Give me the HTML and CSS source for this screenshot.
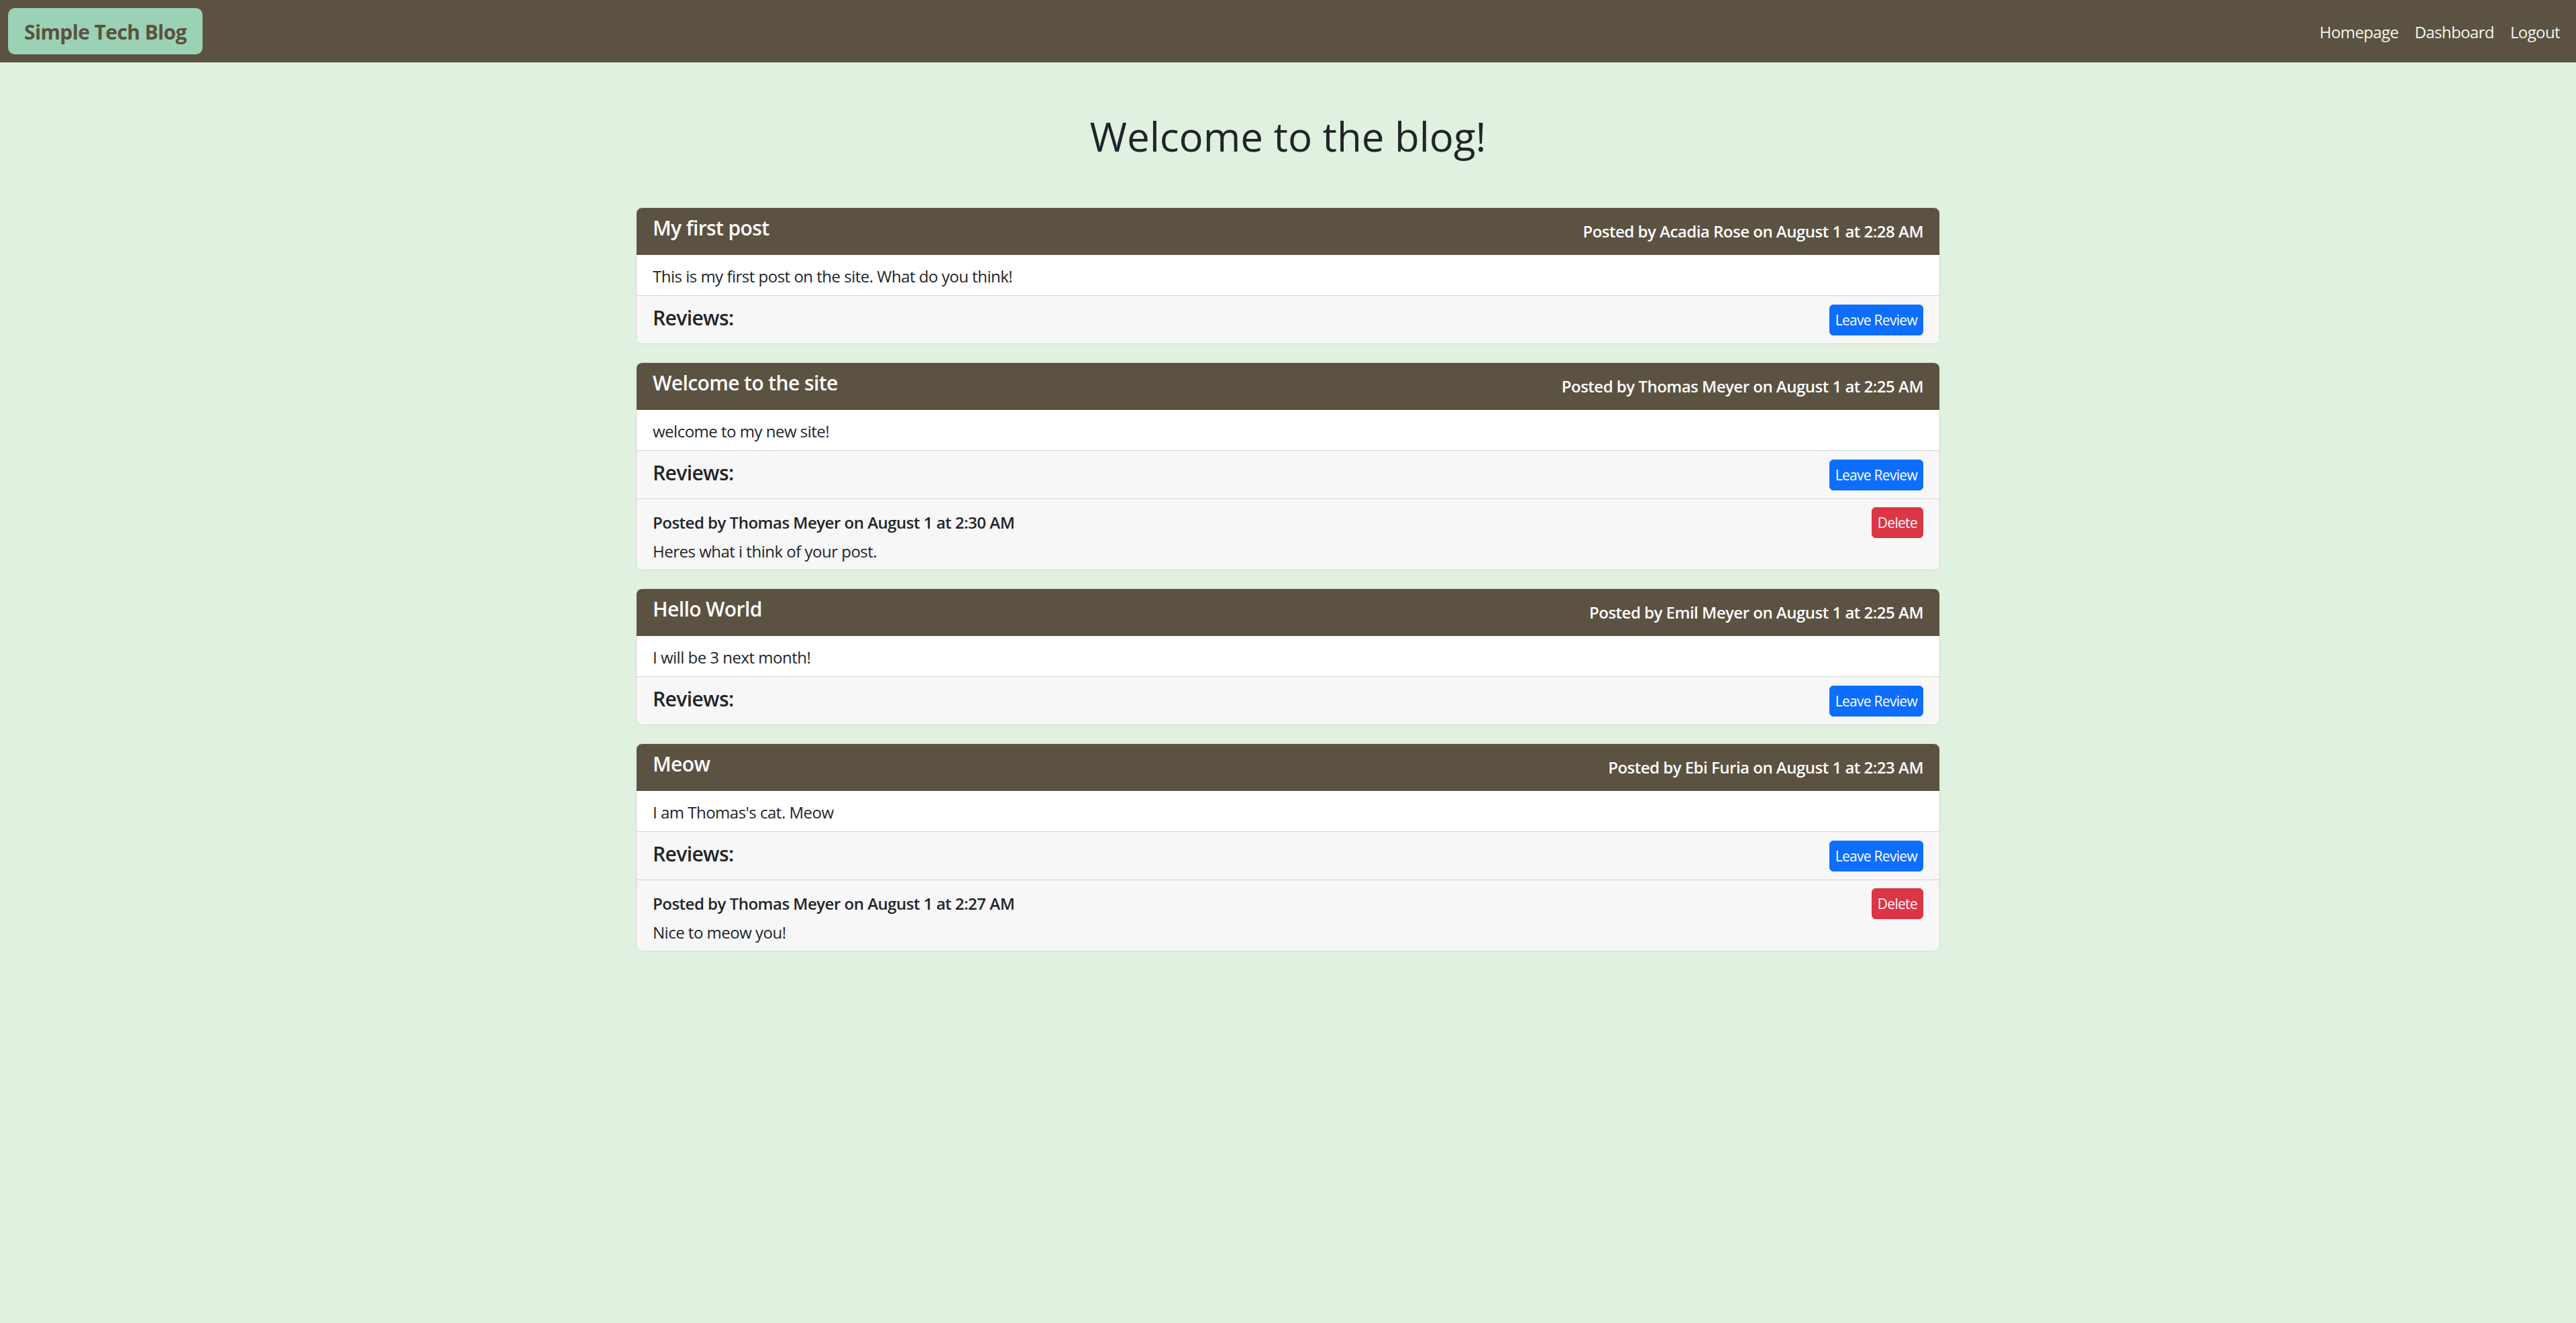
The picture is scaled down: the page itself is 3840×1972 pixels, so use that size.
FILE: index.html
```html
<!DOCTYPE html>
<html lang="en">
<head>
<meta charset="utf-8">
<title>Simple Tech Blog</title>
<link rel="stylesheet" href="styles.css">
</head>
<body>
<nav class="navbar">
  <a class="brand" href="#">Simple Tech Blog</a>
  <div class="nav-links">
    <a href="#">Homepage</a>
    <a href="#">Dashboard</a>
    <a href="#">Logout</a>
  </div>
</nav>
<main class="container">
  <h1 class="page-title">Welcome to the blog!</h1>

  <article class="card">
    <header class="card-header">
      <h5 class="post-title">My first post</h5>
      <span class="post-meta">Posted by Acadia Rose on August 1 at 2:28 AM</span>
    </header>
    <div class="card-body"><p>This is my first post on the site. What do you think!</p></div>
    <div class="card-footer">
      <h5 class="reviews-title">Reviews:</h5>
      <button class="btn btn-primary">Leave Review</button>
    </div>
  </article>

  <article class="card">
    <header class="card-header">
      <h5 class="post-title">Welcome to the site</h5>
      <span class="post-meta">Posted by Thomas Meyer on August 1 at 2:25 AM</span>
    </header>
    <div class="card-body"><p>welcome to my new site!</p></div>
    <div class="card-footer">
      <h5 class="reviews-title">Reviews:</h5>
      <button class="btn btn-primary">Leave Review</button>
    </div>
    <div class="review">
      <div class="review-head">
        <span class="review-meta">Posted by Thomas Meyer on August 1 at 2:30 AM</span>
        <button class="btn btn-danger">Delete</button>
      </div>
      <p>Heres what i think of your post.</p>
    </div>
  </article>

  <article class="card">
    <header class="card-header">
      <h5 class="post-title">Hello World</h5>
      <span class="post-meta">Posted by Emil Meyer on August 1 at 2:25 AM</span>
    </header>
    <div class="card-body"><p>I will be 3 next month!</p></div>
    <div class="card-footer">
      <h5 class="reviews-title">Reviews:</h5>
      <button class="btn btn-primary">Leave Review</button>
    </div>
  </article>

  <article class="card">
    <header class="card-header">
      <h5 class="post-title">Meow</h5>
      <span class="post-meta">Posted by Ebi Furia on August 1 at 2:23 AM</span>
    </header>
    <div class="card-body"><p>I am Thomas's cat. Meow</p></div>
    <div class="card-footer">
      <h5 class="reviews-title">Reviews:</h5>
      <button class="btn btn-primary">Leave Review</button>
    </div>
    <div class="review">
      <div class="review-head">
        <span class="review-meta">Posted by Thomas Meyer on August 1 at 2:27 AM</span>
        <button class="btn btn-danger">Delete</button>
      </div>
      <p>Nice to meow you!</p>
    </div>
  </article>
</main>
</body>
</html>
```

FILE: styles.css
```css
html, body {
  margin: 0;
  padding: 0;
}

body {
  background: #e0f1df;
  font-family: "Open Sans", "Noto Sans", sans-serif;
  font-size: 24px;
  line-height: 1.5;
  color: #212529;
  min-height: 1972px;
}

.navbar {
  display: flex;
  justify-content: space-between;
  align-items: center;
  height: 93px;
  box-sizing: border-box;
  padding: 0 12px;
  background: #5b5242;
}

.brand {
  display: block;
  background: #9bd1b4;
  color: #5b5242;
  font-weight: 700;
  font-size: 30px;
  line-height: 45px;
  padding: 13px 24px 11px;
  border-radius: 10px;
  text-decoration: none;
  letter-spacing: -0.6px;
}

.nav-links {
  display: flex;
  padding-top: 3px;
}

.nav-links a {
  color: #f3f5ec;
  text-decoration: none;
  font-size: 24px;
  line-height: 36px;
  padding: 0 12px;
  letter-spacing: -0.6px;
}

.container {
  width: 1944px;
  margin: 0 auto;
}

.page-title {
  font-size: 60px;
  font-weight: 500;
  line-height: 72px;
  margin: 74px 0 70px;
  text-align: center;
  color: #212529;
}

.card {
  background: #fff;
  border: 1px solid #d3d6d2;
  border-radius: 9px;
  margin-bottom: 27px;
  overflow: hidden;
}

.card-header {
  display: flex;
  justify-content: space-between;
  align-items: center;
  padding: 12px 24px;
  background: #5b5242;
  color: #fff;
}

.post-title,
.reviews-title {
  font-size: 30px;
  font-weight: 600;
  line-height: 36px;
  margin: 0 0 10px;
  letter-spacing: -0.6px;
}

.reviews-title {
  margin: 2px 0 8px;
}

.post-meta {
  font-weight: 600;
  font-size: 24px;
  line-height: 36px;
  letter-spacing: -0.5px;
}

.card-body {
  padding: 14px 24px 10px;
  letter-spacing: -0.5px;
}

.card-body p,
.review p {
  margin: 0;
}

.card-footer {
  display: flex;
  justify-content: space-between;
  align-items: center;
  padding: 13px 24px 12px;
  background: #f7f7f7;
  border-top: 1px solid #d3d6d2;
}

.review {
  padding: 12px 24px 11px;
  background: #f7f7f7;
  border-top: 1px solid #d3d6d2;
  letter-spacing: -0.5px;
}

.review p {
  padding-top: 2px;
  margin-bottom: -2px;
}

.review-head {
  display: flex;
  justify-content: space-between;
  align-items: center;
}

.review-meta {
  font-weight: 600;
  line-height: 36px;
}

.btn {
  font-family: inherit;
  font-size: 21px;
  line-height: 30px;
  padding: 7px 8px;
  border: 1px solid transparent;
  border-radius: 6px;
  color: #fff;
  cursor: pointer;
  letter-spacing: -0.7px;
}

.btn-primary {
  background: #0d6efd;
  border-color: #0d6efd;
}

.btn-danger {
  background: #dc3545;
  border-color: #dc3545;
}
```
